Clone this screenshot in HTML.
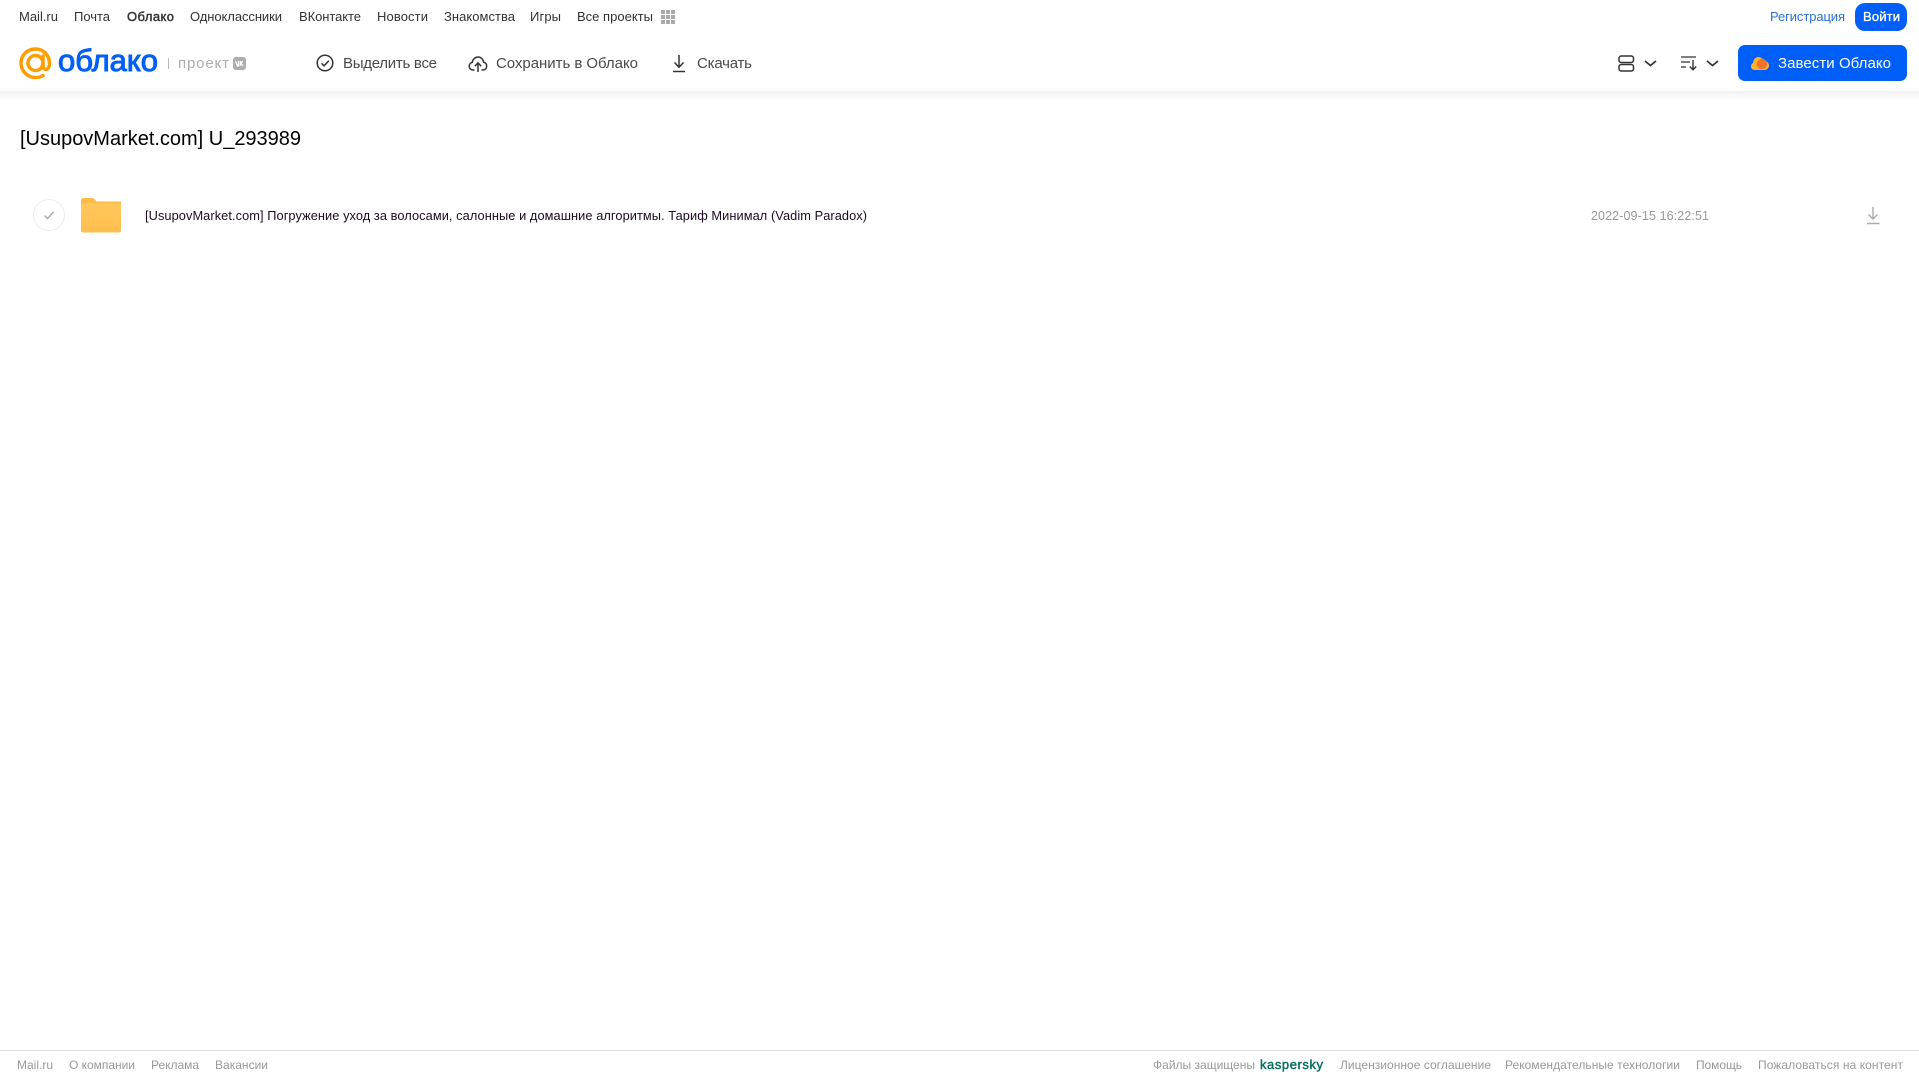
<!DOCTYPE html>
<html lang="ru">
<head>
<meta charset="utf-8">
<title>Облако</title>
<style>
html,body{margin:0;padding:0;background:#fff;width:1919px;height:1079px;overflow:hidden}
svg{display:block;position:absolute;left:0;top:0}
text{font-family:"Liberation Sans",Arial,sans-serif}
.n{font-size:13px;fill:#333}
.a{font-size:15px;fill:#4a4a4a}
.f{font-size:12px;fill:#999}
</style>
</head>
<body>
<svg width="1919" height="1079" viewBox="0 0 1919 1079" xmlns="http://www.w3.org/2000/svg">
<defs>
<linearGradient id="sh" x1="0" y1="0" x2="0" y2="1"><stop offset="0" stop-color="#f1f1f1"/><stop offset="1" stop-color="#fff"/></linearGradient>
<linearGradient id="fo" x1="0" y1="0" x2="0" y2="1"><stop offset="0" stop-color="#ffc75c"/><stop offset="1" stop-color="#ffbf4d"/></linearGradient>
</defs>
<rect x="0" y="91" width="1919" height="9" fill="url(#sh)"/>

<!-- top nav -->
<text class="n" x="19" y="21" textLength="39">Mail.ru</text>
<text class="n" x="74" y="21" textLength="36">Почта</text>
<text class="n" x="127" y="21" textLength="47" stroke="#333" stroke-width=".45">Облако</text>
<text class="n" x="190" y="21" textLength="92">Одноклассники</text>
<text class="n" x="299" y="21" textLength="62">ВКонтакте</text>
<text class="n" x="377" y="21" textLength="51">Новости</text>
<text class="n" x="444" y="21" textLength="71">Знакомства</text>
<text class="n" x="530" y="21" textLength="31">Игры</text>
<text class="n" x="577" y="21" textLength="76">Все проекты</text>
<g fill="#aaa">
<rect x="661" y="10" width="4" height="4"/><rect x="666" y="10" width="4" height="4"/><rect x="671" y="10" width="4" height="4"/>
<rect x="661" y="15" width="4" height="4"/><rect x="666" y="15" width="4" height="4"/><rect x="671" y="15" width="4" height="4"/>
<rect x="661" y="20" width="4" height="4"/><rect x="666" y="20" width="4" height="4"/><rect x="671" y="20" width="4" height="4"/>
</g>
<text x="1770" y="21" font-size="13" fill="#2a6fdb" textLength="75">Регистрация</text>
<rect x="1855" y="3" width="52" height="28" rx="10" fill="#005ff9"/>
<text x="1863" y="21" font-size="13" fill="#fff" stroke="#fff" stroke-width=".35" textLength="37">Войти</text>

<!-- logo -->
<g fill="none" stroke="#ff9e00" stroke-width="3.500" stroke-linecap="round">
<circle cx="35.500" cy="63" r="7.500"/>
<path d="M43 56v9.500c0 5.500 6.500 5.500 6.500-2 0-8-6-14.500-14-14.500S21 55 21 63s6.500 14.500 14.500 14.500c3 0 5.500-.6 7.500-2"/>
</g>
<text x="58" y="71" font-size="31" fill="#005ff9" stroke="#005ff9" stroke-width="1" textLength="100" lengthAdjust="spacingAndGlyphs">облако</text>
<rect x="168" y="58" width="1" height="11" fill="#bbb"/>
<text x="178" y="68" font-size="15" fill="#adadad" textLength="51">проект</text>
<rect x="233" y="57" width="13" height="13" rx="3" fill="#adadad"/>
<path d="M235.500 61l2 5h1v-5M242.800 61l-2 2.300 2.300 2.700M240.300 61v5" fill="none" stroke="#fff" stroke-width="1.200"/>

<!-- actions -->
<circle cx="325" cy="63" r="7.800" fill="none" stroke="#333" stroke-width="1.500"/>
<path d="M321.500 63.300l2.500 2.500 4.800-5" fill="none" stroke="#333" stroke-width="1.500"/>
<text class="a" x="343" y="68" textLength="94">Выделить все</text>

<path d="M474.500 70h-1.500c-2.200 0-3.800-1.700-3.800-3.800 0-1.900 1.300-3.400 3-3.800.5-3 2.800-5.400 5.800-5.400s5.200 2.300 5.700 5.200c1.700.3 3 1.900 3 3.900 0 2.200-1.700 3.900-3.800 3.900h-1.400" fill="none" stroke="#333" stroke-width="1.500"/>
<path d="M478 72v-9M474.800 66.300l3.200-3.500 3.200 3.500" fill="none" stroke="#333" stroke-width="1.500"/>
<text class="a" x="496" y="68" textLength="142">Сохранить в Облако</text>

<path d="M679 55v12M674.500 62.500l4.500 4.800 4.500-4.800M673 71.500h12" fill="none" stroke="#333" stroke-width="1.500"/>
<text class="a" x="697" y="68" textLength="55">Скачать</text>

<!-- right icons -->
<rect x="1619" y="56" width="14.500" height="6.500" rx="2.200" fill="none" stroke="#333" stroke-width="1.500"/>
<rect x="1619" y="64.500" width="14.500" height="6.500" rx="2.200" fill="none" stroke="#333" stroke-width="1.500"/>
<path d="M1645 61l5.500 4.500 5.500-4.500" fill="none" stroke="#333" stroke-width="1.700"/>
<path d="M1681 57h15M1681 62h9M1681 67h5" fill="none" stroke="#333" stroke-width="1.300"/>
<path d="M1693 60v9.500M1689.800 66.500l3.200 3.200 3.200-3.200" fill="none" stroke="#333" stroke-width="1.400"/>
<path d="M1707 61l5.500 4.500 5.500-4.500" fill="none" stroke="#333" stroke-width="1.700"/>

<!-- CTA -->
<rect x="1738" y="45" width="169" height="36" rx="7" fill="#005ff9"/>
<path d="M1754.500 70c-2.200 0-3.500-1.700-3.500-3.600 0-1.600.9-2.900 2.100-3.500.1-3.100 2.200-5.900 5.300-5.900 2.600 0 4.400 1.600 5.100 3.700 3 0 5.500 2 5.500 4.800s-2.300 4.500-4.800 4.500z" fill="#ffb02e"/>
<circle cx="1762" cy="64" r="5.200" fill="#f4732a"/>
<text x="1778" y="68" font-size="15" fill="#fff" textLength="113">Завести Облако</text>

<!-- title -->
<text x="20" y="145" font-size="20" fill="#000" textLength="281">[UsupovMarket.com] U_293989</text>

<!-- row -->
<circle cx="49" cy="215" r="15.500" fill="#fff" stroke="#eee" stroke-width="1"/>
<path d="M44.500 215.500l3 3 6-6.500" fill="none" stroke="#a5a5a5" stroke-width="1.300"/>
<path d="M81 200.500c0-1.400 1-2.500 2.500-2.500h8c2 0 3 .8 4 2.200l1 1.300H121V232H81z" fill="#fdbb47"/>
<path d="M81 205c0-1 1-1.500 2-1.500h36c1 0 2 .5 2 1.500v25c0 1.400-1 2.500-2.500 2.500h-35c-1.500 0-2.500-1.100-2.500-2.500z" fill="url(#fo)"/>
<text x="145" y="220" font-size="12.800" fill="#1c0a24" textLength="722">[UsupovMarket.com] Погружение уход за волосами, салонные и домашние алгоритмы. Тариф Минимал (Vadim Paradox)</text>
<text x="1591" y="220" font-size="12.500" fill="#999" textLength="118">2022-09-15 16:22:51</text>
<path d="M1873 207v12M1868.500 214.500l4.500 4.500 4.500-4.500M1867 223.500h12.500" fill="none" stroke="#aaa" stroke-width="1.400"/>

<!-- footer -->
<rect x="0" y="1050" width="1919" height="1" fill="#ddd"/>
<text class="f" x="17" y="1069" textLength="36">Mail.ru</text>
<text class="f" x="69" y="1069" textLength="66">О компании</text>
<text class="f" x="151" y="1069" textLength="48">Реклама</text>
<text class="f" x="215" y="1069" textLength="53">Вакансии</text>
<text class="f" x="1153" y="1069" font-size="12.500" textLength="102">Файлы защищены</text>
<text x="1260" y="1069" font-size="13" fill="#006d5c" stroke="#006d5c" stroke-width=".4" textLength="63">kaspersky</text>
<text class="f" x="1340" y="1069" textLength="151">Лицензионное соглашение</text>
<text class="f" x="1505" y="1069" textLength="175">Рекомендательные технологии</text>
<text class="f" x="1696" y="1069" textLength="46">Помощь</text>
<text class="f" x="1758" y="1069" textLength="145">Пожаловаться на контент</text>
</svg>
</body>
</html>
